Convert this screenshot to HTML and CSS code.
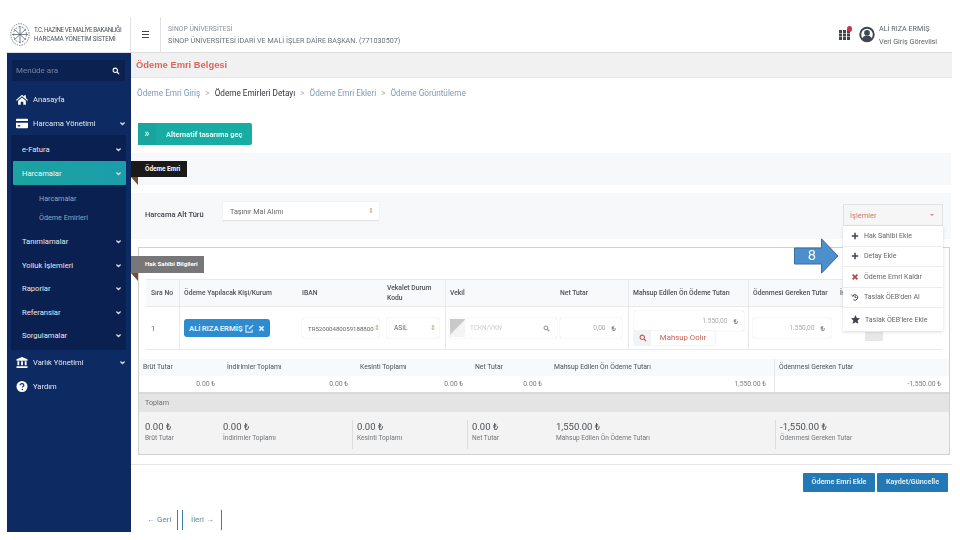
FILE: index.html
```html
<!DOCTYPE html>
<html lang="tr">
<head>
<meta charset="utf-8">
<title>Ödeme Emri Belgesi</title>
<link rel="stylesheet" href="styles.css">
</head>
<body>
<svg class="defs" width="0" height="0" aria-hidden="true">
  <defs>
    <symbol id="chev" viewBox="0 0 10 10"><path d="M2 3.500l3 3 3-3" fill="none" stroke="currentColor" stroke-width="1.800"/></symbol>
    <symbol id="search" viewBox="0 0 12 12"><circle cx="5" cy="5" r="3.300" fill="none" stroke="currentColor" stroke-width="1.700"/><path d="M7.500 7.500l3.200 3.200" stroke="currentColor" stroke-width="1.900"/></symbol>
    <symbol id="plus" viewBox="0 0 10 10"><path d="M5 1v8M1 5h8" stroke="currentColor" stroke-width="1.900"/></symbol>
    <symbol id="times" viewBox="0 0 10 10"><path d="M2 2l6 6M8 2l-6 6" stroke="currentColor" stroke-width="2.200"/></symbol>
  </defs>
</svg>
<div class="app">
  <header class="topbar">
    <div class="brand">
      <svg class="seal" viewBox="0 0 20 23" fill="none" stroke="#5b6570" stroke-width=".8">
        <ellipse cx="10" cy="11.500" rx="9.200" ry="10.800" stroke-dasharray="1.500 1"/>
        <ellipse cx="10" cy="11.500" rx="6.500" ry="7.800" stroke-dasharray="2 1.500"/>
        <path d="M4 6l12 11M16 6L4 17M10 3v17M2 11.500h16"/>
      </svg>
      <div class="brand-text"><div class="brand-l1">T.C. HAZİNE VE MALİYE BAKANLIĞI</div><div>HARCAMA YÖNETİM SİSTEMİ</div></div>
    </div>
    <div class="burger"><span></span><span></span><span></span></div>
    <div class="org"><div class="org-small">SİNOP ÜNİVERSİTESİ</div><div>SİNOP ÜNİVERSİTESİ İDARİ VE MALİ İŞLER DAİRE BAŞKAN. (771030507)</div></div>
    <div class="apps">
      <svg viewBox="0 0 11 10" width="11" height="10" fill="#3f4650"><path d="M0 0h3v3H0zM4 0h3v3H4zM8 0h3v3H8zM0 3.500h3v3H0zM4 3.500h3v3H4zM8 3.500h3v3H8zM0 7h3v3H0zM4 7h3v3H4zM8 7h3v3H8z"/></svg>
      <span class="badge"></span>
    </div>
    <svg class="avatar" viewBox="0 0 18 18" width="16" height="17"><circle cx="9" cy="9" r="7.600" fill="none" stroke="#3f4650" stroke-width="2.200"/><circle cx="9" cy="7" r="3.200" fill="#3f4650"/><path d="M3.500 14c1-3 3-3.800 5.500-3.800s4.500.8 5.500 3.800C13 16 11 17 9 17s-4-1-5.500-3z" fill="#3f4650"/></svg>
    <div class="user"><div>ALİ RIZA ERMİŞ</div><div>Veri Giriş Görevlisi</div></div>
  </header>

  <div class="body">
    <nav class="sidebar">
      <div class="side-search"><span>Menüde ara</span><svg width="8" height="8"><use href="#search"/></svg></div>
      <div class="mi top"><svg class="mi-ic" viewBox="0 0 14 12"><path d="M7 .5L0 6.500l1 1 6-5.200 6 5.200 1-1-2.500-2.200V1h-2v1.600zM2.500 7.500V12h3V8.500h3V12h3V7.500L7 3.600z" fill="#fff"/></svg><span>Anasayfa</span></div>
      <div class="mi top"><svg class="mi-ic" viewBox="0 0 14 11"><path d="M1 0h12a1 1 0 0 1 1 1v1.500H0V1a1 1 0 0 1 1-1zM0 4.500h14V10a1 1 0 0 1-1 1H1a1 1 0 0 1-1-1zM2 7.500v1.500h3V7.500z" fill="#fff"/></svg><span>Harcama Yönetimi</span><svg class="chev"><use href="#chev"/></svg></div>
      <div class="subpanel">
        <div class="mi sub"><span>e-Fatura</span><svg class="chev"><use href="#chev"/></svg></div>
        <div class="mi sub active"><span>Harcamalar</span><svg class="chev"><use href="#chev"/></svg></div>
        <div class="subsub"><div>Harcamalar</div><div>Ödeme Emirleri</div></div>
        <div class="mi sub"><span>Tanımlamalar</span><svg class="chev"><use href="#chev"/></svg></div>
        <div class="mi sub"><span>Yolluk İşlemleri</span><svg class="chev"><use href="#chev"/></svg></div>
        <div class="mi sub"><span>Raporlar</span><svg class="chev"><use href="#chev"/></svg></div>
        <div class="mi sub"><span>Referanslar</span><svg class="chev"><use href="#chev"/></svg></div>
        <div class="mi sub"><span>Sorgulamalar</span><svg class="chev"><use href="#chev"/></svg></div>
      </div>
      <div class="mi top"><svg class="mi-ic" viewBox="0 0 12 12"><path d="M6 0l6 2.500V4H0V2.500zM1 4.500h2v4.500H1zM5 4.500h2v4.500H5zM9 4.500h2v4.500H9zM0 10h12v2H0z" fill="#fff"/></svg><span>Varlık Yönetimi</span><svg class="chev"><use href="#chev"/></svg></div>
      <div class="mi top"><svg class="mi-ic" viewBox="0 0 12 12"><circle cx="6" cy="6" r="6" fill="#fff"/><path d="M4 4.600C4 3.400 5 2.800 6 2.800s2 .7 2 1.700c0 1.500-1.500 1.300-1.500 2.700" fill="none" stroke="#0e2a62" stroke-width="1.300"/><circle cx="6.400" cy="9.300" r=".9" fill="#0e2a62"/></svg><span>Yardım</span></div>
    </nav>

    <main class="main">
      <div class="titlebar">Ödeme Emri Belgesi</div>
      <div class="crumbs">
        <span>Ödeme Emri Giriş</span><i>&gt;</i><span class="cur">Ödeme Emirleri Detayı</span><i>&gt;</i><span>Ödeme Emri Ekleri</span><i>&gt;</i><span>Ödeme Görüntüleme</span>
      </div>
      <div class="altbtn"><span class="alt-ic">»</span><span class="alt-tx">Alternatif tasarıma geç</span></div>
      <section class="panel p1"></section>
      <section class="panel p2">
        <label>Harcama Alt Türü</label>
        <div class="select sel-main"><span>Taşınır Mal Alımı</span><b>⇕</b></div>
      </section>
      <section class="box">
        <div class="tbl">
          <div class="row head">
            <div class="c c1">Sıra No</div><div class="c c2">Ödeme Yapılacak Kişi/Kurum</div><div class="c">IBAN</div><div class="c">Vekalet Durum Kodu</div><div class="c c5">Vekil</div><div class="c">Net Tutar</div><div class="c c7">Mahsup Edilen Ön Ödeme Tutarı</div><div class="c c8">Ödenmesi Gereken Tutar</div><div class="c">İşlemler</div>
          </div>
          <div class="row data">
            <div class="c c1 num">1</div>
            <div class="c c2"><div class="chip"><span class="chip-tx">ALİ RIZA ERMİŞ</span><svg width="9" height="9" viewBox="0 0 10 10" fill="none" stroke="#cfe4f5" stroke-width="1.300"><path d="M8 6v3H1V2h3"/><path d="M4 6l.4-1.500L8.500.8l1 1L5.500 5.800z" fill="#cfe4f5" stroke="none"/></svg><svg class="chip-x" width="7" height="7"><use href="#times"/></svg></div></div>
            <div class="c"><div class="inp iban"><span>TR52000480059188800</span><b>⇕</b></div></div>
            <div class="c"><div class="inp asil"><span>ASİL</span><b>⇕</b></div></div>
            <div class="c c5"><div class="inp vekil"><span class="flag"></span><span class="ph">TCKN/VKN</span><svg width="7" height="7" class="mag"><use href="#search"/></svg></div></div>
            <div class="c"><div class="inp money net"><span>0,00</span><em>₺</em></div></div>
            <div class="c c7">
              <div class="inp money mah"><span>1.550,00</span><em>₺</em></div>
              <div class="mahbtn"><span class="mah-ic"><svg width="8" height="8"><use href="#search"/></svg></span><span class="mah-tx">Mahsup Oolır</span></div>
            </div>
            <div class="c c8"><div class="inp money ode"><span>1.550,00</span><em>₺</em></div></div>
            <div class="c"><span class="behind"></span></div>
          </div>
        </div>
        <div class="sum sum-h">
          <div>Brüt Tutar</div><div>İndirimler Toplamı</div><div>Kesinti Toplamı</div><div>Net Tutar</div><div>Mahsup Edilen Ön Ödeme Tutarı</div><div class="bl">Ödenmesi Gereken Tutar</div>
        </div>
        <div class="sum sum-v">
          <div>0.00 ₺</div><div>0.00 ₺</div><div>0.00 ₺</div><div>0.00 ₺</div><div>1,550.00 ₺</div><div class="bl">-1,550.00 ₺</div>
        </div>
        <div class="toplam">Toplam</div>
        <div class="stats">
          <div class="st"><b>0.00 ₺</b><small>Brüt Tutar</small></div>
          <div class="st"><b>0.00 ₺</b><small>İndirimler Toplamı</small></div>
          <div class="st ln"><b>0.00 ₺</b><small>Kesinti Toplamı</small></div>
          <div class="st ln"><b>0.00 ₺</b><small>Net Tutar</small></div>
          <div class="st"><b>1,550.00 ₺</b><small>Mahsup Edilen Ön Ödeme Tutarı</small></div>
          <div class="st ln"><b>-1,550.00 ₺</b><small>Ödenmesi Gereken Tutar</small></div>
        </div>
      </section>
      <hr class="rule">
      <div class="actions"><span>Ödeme Emri Ekle</span><span>Kaydet/Güncelle</span></div>
      <div class="pager"><span class="pg">← Geri</span><span class="pg pg2">İleri →</span></div>

      <div class="ribbon r-dark">Ödeme Emri</div>
      <div class="ribbon r-gray">Hak Sahibi Bilgileri</div>

      <div class="drop">
        <div class="drop-btn"><span>İşlemler</span><i></i></div>
        <ul class="drop-menu">
          <li><svg width="8" height="8"><use href="#plus"/></svg>Hak Sahibi Ekle</li>
          <li><svg width="8" height="8"><use href="#plus"/></svg>Detay Ekle</li>
          <li class="x"><svg width="8" height="8"><use href="#times"/></svg>Ödeme Emri Kaldır</li>
          <li><svg width="8" height="8" viewBox="0 0 10 10" fill="none" stroke="#444" stroke-width="1.200"><path d="M2 3.500A3.500 3.500 0 1 1 3 8.500M.5 2.500L2 4l1.800-1"/><path d="M5 3v2.500h1.800"/></svg>Taslak ÖEB'den Al</li>
          <li><svg width="9" height="9" viewBox="0 0 10 10" fill="#3f4650"><path d="M5 0l1.500 3.300 3.500.4-2.600 2.400.8 3.600L5 8l-3.200 1.700.8-3.600L0 3.700l3.500-.4z"/></svg>Taslak ÖEB'lere Ekle</li>
        </ul>
      </div>

      <svg class="callout" viewBox="0 0 45 36" width="45" height="36"><path d="M.5 10h27V.8L44 18 27.500 35.200V26H.5z" fill="#4d8fcd" stroke="#3a6d9f"/></svg>
      <span class="callout-n">8</span>
    </main>
  </div>
</div>
</body>
</html>
```
FILE: styles.css
```css
* { box-sizing: border-box; }
html, body { margin: 0; padding: 0; background: #fff; }
body { font-family: Roboto, "Liberation Sans", sans-serif; font-size: 8px; color: #3c4248; width: 960px; height: 540px; overflow: hidden; }
.defs { position: absolute; }
.app { width: 945px; height: 515px; margin: 17px 0 0 7px; filter: blur(.4px); display: flex; flex-direction: column; }

.topbar { height: 36px; flex: none; display: flex; align-items: center; border-bottom: 1px solid #dedede; }
.brand { width: 124px; height: 100%; display: flex; align-items: center; padding-left: 3px; border-right: 1px solid #e2e2e2; flex: none; }
.seal { width: 20px; height: 23px; flex: none; }
.brand-text { margin-left: 4px; font-size: 6.300px; line-height: 9px; color: #4a515a; white-space: nowrap; letter-spacing: -.12px; }
.brand-l1 { letter-spacing: -.42px; }
.burger { width: 30px; height: 100%; flex: none; display: flex; flex-direction: column; justify-content: center; align-items: center; gap: 1.500px; border-right: 1px solid #e2e2e2; }
.burger span { width: 7px; height: 1.500px; background: #444; }
.org { margin-left: 7px; flex: 1; font-size: 7.170px; line-height: 12px; color: #6a7178; white-space: nowrap; }
.org-small { font-size: 6.800px; color: #8a9096; }
.apps { position: relative; width: 11px; height: 10px; margin-right: 9px; flex: none; }
.badge { position: absolute; width: 5px; height: 6px; right: -2px; top: -4px; background: #c8324a; border-radius: 50%; }
.avatar { flex: none; margin-right: 4px; }
.user { width: 73px; flex: none; font-size: 7.200px; line-height: 13px; color: #5b6269; white-space: nowrap; }

.body { flex: 1; display: flex; min-height: 0; }
.sidebar { width: 124px; flex: none; background: #0e2a62; padding-top: 7px; color: #e4e9f2; display: flex; flex-direction: column; }
.side-search { height: 21px; margin: 0 6px 6px 5px; background: #0b2150; display: flex; align-items: center; justify-content: space-between; padding: 0 5px 0 4px; color: #77849c; font-size: 8px; }
.side-search svg { color: #fff; }
.mi { height: 24px; display: flex; align-items: center; font-size: 7.600px; white-space: nowrap; flex: none; }
.mi.top { padding-left: 9px; }
.mi-ic { width: 12px; height: 11px; flex: none; margin-right: 5px; }
.chev { width: 7px; height: 7px; margin-left: auto; margin-right: 5px; color: #d5dbe6; flex: none; }
.subpanel { margin: 0 5px 0 4px; height: 215px; padding-top: 2px; background: #0a2050; flex: none; }
.mi.sub { padding-left: 11px; }
.mi.sub .chev { margin-right: 4px; }
.mi.sub.active { background: linear-gradient(90deg, #1aa3a0, #1b9dab); border-radius: 1px; margin-left: 2px; padding-left: 9px; color: #eafafa; }
.subsub { height: 44px; padding: 4px 0 0 28px; color: #9aa6bb; font-size: 7.200px; line-height: 19px; }
.mi.sub:nth-last-child(-n+3) { height: 23.500px; }

.main { position: relative; width: 821px; flex: none; }
.titlebar { height: 25px; background: #f1f1f1; border-bottom: 1px solid #e6e6e6; color: #e0665c; font: bold 9.400px/24px "Liberation Sans", sans-serif; padding-left: 5px; }
.crumbs { height: 45px; padding: 8px 0 0 6px; font-size: 8.200px; line-height: 14px; color: #7f9ab0; display: flex; align-items: flex-start; white-space: nowrap; }
.crumbs i { font-style: normal; margin: 0 5px; color: #a9b4bd; }
.crumbs .cur { color: #30353a; }
.altbtn { width: 114px; height: 22px; margin-left: 7px; background: #17aca4; border-radius: 2px; display: flex; align-items: center; color: #e8fbf8; font-size: 7.400px; font-weight: 700; white-space: nowrap; }
.alt-ic { width: 18px; text-align: center; font-size: 10px; background: #17a59e; line-height: 22px; }
.alt-tx { margin-left: 10px; }
.panel { width: 820px; background: #f7f8fa; }
.p1 { height: 32px; margin-top: 8px; }
.p2 { height: 46px; margin-top: 8px; display: flex; align-items: center; padding-left: 14px; font-size: 7.500px; color: #40464c; }
.p2 label { width: 78px; font-weight: 500; margin-top: -3px; }
.select { width: 156px; height: 19px; background: #fff; border-bottom: 1px solid #e3e3e3; box-shadow: 0 0 1px #ddd; display: flex; align-items: center; justify-content: space-between; padding: 0 5px 0 7px; font-size: 7.200px; color: #666; margin-top: -9px; }
.select b, .inp b { font-weight: 400; font-size: 7px; color: #b0a080; }

.box { width: 812px; height: 208px; margin: 8px 0 0 7px; border: 1px solid #cfd1d3; padding-top: 31px; }
.tbl { margin: 0 7px; border-top: 1px solid #e7e9ea; border-bottom: 1px solid #e7e9ea; height: 71px; width: 797px; }
.row { display: grid; grid-template-columns: 33px 122px 85px 59px 114px 69px 120px 91px 104px; }
.head { height: 27px; background: #f8f9fa; border-bottom: 1px solid #e7e9ea; font-size: 6.750px; line-height: 10px; color: #4a5056; }
.c { display: flex; align-items: center; padding: 0 1px; min-width: 0; }
.head .c { font-weight: 500; }
.c1 { padding-left: 5px; white-space: nowrap; }
.c2, .c5, .c7, .c8 { border-left: 1px solid #e7e9ea; padding-left: 4px; }
.c7, .c8 { white-space: nowrap; }
.data { height: 42px; }
.data .c { position: relative; }
.num { color: #7a6a20; font-size: 7.500px; }
.chip { width: 86px; height: 18px; border-radius: 3px; background: #2f8bd0; color: #dcedfa; display: flex; align-items: center; padding: 0 6px 0 5px; font-size: 7.800px; font-weight: 700; white-space: nowrap; }
.chip-tx { width: 50px; word-spacing: -.6px; letter-spacing: -.1px; }
.chip svg { margin-left: 6px; flex: none; }
.chip-x { color: #dcedfa; margin-left: 4px !important; }
.inp { height: 20px; background: #fff; border-radius: 2px; box-shadow: 0 0 1px #bbb; display: flex; align-items: center; white-space: nowrap; overflow: hidden; font-size: 6.600px; color: #666; }
.iban { width: 77px; padding: 0 3px 0 6px; justify-content: space-between; font-size: 6.100px; }
.asil { width: 52px; padding: 0 3px 0 7px; justify-content: space-between; }
.vekil { width: 100%; margin-left: -1px; padding-right: 7px; color: #ccc; }
.vekil .flag { width: 15px; height: 18px; background: linear-gradient(135deg, #c9c9c9 45%, #f4f4f4 50%); margin: 0 5px 0 1px; flex: none; }
.vekil .ph { flex: 1; font-size: 6.400px; }
.mag { color: #8a8f94; }
.money { justify-content: flex-end; padding-right: 6px; color: #aaa; }
.money em { font-style: normal; color: #666; margin-left: 6px; font-size: 8px; }
.net { width: 62px; }
.ode { width: 78px; }
.mah { position: absolute; left: 5px; top: 4px; width: 110px; }
.mahbtn { position: absolute; left: 5px; top: 24px; width: 81px; height: 14px; display: flex; box-shadow: 0 0 1px #bbb; color: #c86056; font-size: 7.800px; background: #fff; }
.mah-ic { width: 17px; background: #f1f4f7; display: flex; align-items: center; justify-content: center; }
.mah-tx { flex: 1; text-align: center; line-height: 14px; }
.behind { position: absolute; left: 26px; bottom: 8px; width: 18px; height: 9px; background: #e7e7e7; }

.sum { display: grid; grid-template-columns: 84px 133px 115px 79px 224px 175px; }
.sum-h { margin-top: 9px; height: 17px; background: #f8f9fa; font-size: 6.800px; line-height: 16px; color: #4a5056; }
.sum-h > div { padding-left: 4px; white-space: nowrap; }
.sum-v { height: 17.500px; background: #fff; border-bottom: 2px solid #d9d9d9; font-size: 6.800px; line-height: 16px; color: #7d7d7d; text-align: right; }
.sum-v > div { padding-right: 8px; }
.bl { border-left: 1px solid #e5e5e5; }
.toplam { height: 18px; background: #e4e4e4; font-size: 7.200px; line-height: 17px; padding-left: 6px; color: #6b7075; }
.stats { height: 42px; background: #f3f3f3; display: grid; grid-template-columns: 79px 134px 115px 84px 224px 174px; padding-top: 8px; }
.st { padding-left: 6px; height: 29px; white-space: nowrap; }
.st.ln { border-left: 1px solid #dcdcdc; padding-left: 4px; }
.st:nth-child(2), .st:nth-child(5) { padding-left: 5px; }
.st b { display: block; font-weight: 400; font-size: 9.500px; line-height: 13px; color: #4c5258; }
.st small { display: block; font-size: 6.600px; line-height: 10px; color: #70767c; }

.rule { margin: 9px 0 0; height: 1px; border: 0; background: #e6e6e6; width: 821px; }
.actions { display: flex; justify-content: flex-end; gap: 2px; margin: 8px 4px 0 0; }
.actions span { height: 19px; width: 72px; background: #2279b5; color: #dcebf5; font-size: 7.200px; font-weight: 700; line-height: 18px; text-align: center; border-radius: 1px; white-space: nowrap; }
.actions span:last-child { width: 71px; }
.pager { display: flex; margin: 18px 0 0 9px; height: 20px; color: #5f8aa5; font-size: 8px; }
.pg { width: 38px; padding-left: 7px; border-right: 1px solid #3f7ea5; line-height: 20px; white-space: nowrap; }
.pg2 { width: 40px; margin-left: 4px; border-left: 1px solid #3f7ea5; padding-left: 8px; }

.ribbon { position: absolute; left: 0; color: #fff; font-weight: 700; padding-left: 14px; white-space: nowrap; }
.ribbon::after { content: ""; position: absolute; left: 0; bottom: -8px; border-top: 8px solid #7b4d24; border-left: 7px solid transparent; }
.r-dark { top: 108px; width: 56px; height: 16px; background: #1a1a1a; font-size: 6.400px; line-height: 16px; }
.r-gray { top: 203px; width: 73px; height: 17px; background: #77777a; font-size: 6.200px; line-height: 17px; }

.drop { position: absolute; left: 712px; top: 151px; width: 100px; font-size: 7px; }
.drop-btn { height: 22px; background: #f6f6f6; border: 1px solid #e3e3e3; display: flex; align-items: center; justify-content: space-between; padding: 0 8px 0 6px; color: #d07a74; font-size: 7.500px; }
.drop-btn i { border-top: 2.500px solid #c88; border-left: 2px solid transparent; border-right: 2px solid transparent; }
.drop-menu { list-style: none; margin: 0; padding: 0; background: #fff; box-shadow: 0 1px 3px rgba(0,0,0,.15); color: #666; }
.drop-menu li { height: 20.500px; display: flex; align-items: center; padding-left: 8px; border-bottom: 1px solid #ececec; white-space: nowrap; gap: 5px; }
.drop-menu li:last-child { border: 0; height: 23px; }
.drop-menu li svg { color: #3f4650; flex: none; }
.drop-menu li.x svg { color: #b8464a; }

.callout { position: absolute; left: 663px; top: 185px; }
.callout-n { position: absolute; left: 677px; top: 192px; font: 14px/20px "Liberation Sans", sans-serif; color: #fff; }
```
